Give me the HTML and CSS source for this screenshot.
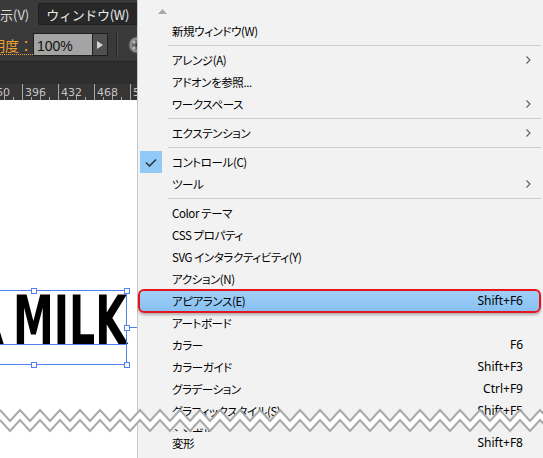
FILE: index.html
```html
<!DOCTYPE html>
<html lang="ja">
<head>
<meta charset="utf-8">
<title>ウィンドウ メニュー</title>
<link rel="stylesheet" href="styles.css">
</head>
<body>
<div class="screen">
  <div class="app">
    <div class="menubar">
      <span class="mb-item">表示(V)</span>
      <span class="mb-btn">ウィンドウ(W)</span>
    </div>
    <div class="toolbar">
      <span class="tb-label">明度：</span>
      <div class="field">
        <span class="field-val">100%</span>
        <span class="field-btn"><svg width="6" height="8" viewBox="0 0 6 8"><path d="M0 0 L6 4 L0 8 Z" fill="#d6d6d6"/></svg></span>
      </div>
      <span class="tb-sep"></span>
      <span class="tb-icon"><svg width="18" height="18" viewBox="0 0 18 18"><circle cx="9" cy="9" r="8" fill="#8c8c8c" stroke="#5a5a5a"/><circle cx="9" cy="9" r="5" fill="#6a6a6a"/><circle cx="6" cy="6" r="1.5" fill="#bbb"/><circle cx="12" cy="6" r="1.5" fill="#bbb"/><circle cx="6" cy="12" r="1.5" fill="#bbb"/><circle cx="12" cy="12" r="1.5" fill="#bbb"/><circle cx="9" cy="9" r="1.5" fill="#333"/></svg></span>
    </div>
    <div class="strip"></div>
    <div class="ruler">
      <svg width="137" height="16" viewBox="0 0 137 16">
        <g stroke="#a8a8a8" stroke-width="1">
          <line x1="22.5" y1="0" x2="22.5" y2="16"/>
          <line x1="58.5" y1="0" x2="58.5" y2="16"/>
          <line x1="94.5" y1="0" x2="94.5" y2="16"/>
          <line x1="130.5" y1="0" x2="130.5" y2="16"/>
          <line x1="13.5" y1="13" x2="13.5" y2="16"/>
          <line x1="4.5" y1="11" x2="4.5" y2="16"/>
          <line x1="31.5" y1="13" x2="31.5" y2="16"/>
          <line x1="40.5" y1="11" x2="40.5" y2="16"/>
          <line x1="49.5" y1="13" x2="49.5" y2="16"/>
          <line x1="67.5" y1="13" x2="67.5" y2="16"/>
          <line x1="76.5" y1="11" x2="76.5" y2="16"/>
          <line x1="85.5" y1="13" x2="85.5" y2="16"/>
          <line x1="103.5" y1="13" x2="103.5" y2="16"/>
          <line x1="112.5" y1="11" x2="112.5" y2="16"/>
          <line x1="121.5" y1="13" x2="121.5" y2="16"/>
        </g>
        <g class="ruler-num" fill="#c4c4c4">
          <text x="-11" y="12">360</text>
          <text x="25" y="12">396</text>
          <text x="61" y="12">432</text>
          <text x="97" y="12">468</text>
          <text x="133" y="12">504</text>
        </g>
      </svg>
    </div>
    <div class="canvas">
      <svg class="art" width="137" height="358" viewBox="0 0 137 358">
        <text class="art-text" x="-40" y="244" textLength="44" lengthAdjust="spacingAndGlyphs">A</text>
        <text class="art-text" x="13" y="244" textLength="114" lengthAdjust="spacingAndGlyphs">MILK</text>
        <g stroke="#4f80ef" stroke-width="1" fill="none">
          <rect x="-60.5" y="190.5" width="187" height="74"/>
          <line x1="-60" y1="244.5" x2="127" y2="244.5"/>
          <line x1="127" y1="227.5" x2="137" y2="227.5"/>
        </g>
        <g stroke="#4f80ef" stroke-width="1" fill="#fff">
          <rect x="31.5" y="188.5" width="5" height="5"/>
          <rect x="124.5" y="188.5" width="5" height="5"/>
          <rect x="124.5" y="225.5" width="5" height="5"/>
          <rect x="31.5" y="262.5" width="5" height="5"/>
          <rect x="124.5" y="262.5" width="5" height="5"/>
        </g>
      </svg>
    </div>
  </div>

  <div class="menu">
    <div class="scroll-up"><svg width="9" height="5" viewBox="0 0 9 5"><path d="M0 5 L4.5 0 L9 5 Z" fill="#a9a9a9"/></svg></div>
    <div class="item"><span class="gutter"></span><span class="label">新規ウィンドウ(W)</span></div>
    <div class="sep"><span></span></div>
    <div class="item"><span class="gutter"></span><span class="label">アレンジ(A)</span><svg class="chev" width="5" height="8" viewBox="0 0 5 8"><path d="M0.5 0.5 L4 4 L0.5 7.5" fill="none" stroke="#5c5c5c" stroke-width="1.1"/></svg></div>
    <div class="item"><span class="gutter"></span><span class="label">アドオンを参照...</span></div>
    <div class="item"><span class="gutter"></span><span class="label">ワークスペース</span><svg class="chev" width="5" height="8" viewBox="0 0 5 8"><path d="M0.5 0.5 L4 4 L0.5 7.5" fill="none" stroke="#5c5c5c" stroke-width="1.1"/></svg></div>
    <div class="sep"><span></span></div>
    <div class="item"><span class="gutter"></span><span class="label">エクステンション</span><svg class="chev" width="5" height="8" viewBox="0 0 5 8"><path d="M0.5 0.5 L4 4 L0.5 7.5" fill="none" stroke="#5c5c5c" stroke-width="1.1"/></svg></div>
    <div class="sep"><span></span></div>
    <div class="item"><span class="gutter checked"><svg width="12" height="9" viewBox="0 0 12 9"><path d="M1 4.5 L4.5 8 L11 1.5" fill="none" stroke="#2b3440" stroke-width="1.6"/></svg></span><span class="label">コントロール(C)</span></div>
    <div class="item"><span class="gutter"></span><span class="label">ツール</span><svg class="chev" width="5" height="8" viewBox="0 0 5 8"><path d="M0.5 0.5 L4 4 L0.5 7.5" fill="none" stroke="#5c5c5c" stroke-width="1.1"/></svg></div>
    <div class="sep"><span></span></div>
    <div class="item"><span class="gutter"></span><span class="label">Color テーマ</span></div>
    <div class="item"><span class="gutter"></span><span class="label">CSS プロパティ</span></div>
    <div class="item"><span class="gutter"></span><span class="label">SVG インタラクティビティ(Y)</span></div>
    <div class="item"><span class="gutter"></span><span class="label">アクション(N)</span></div>
    <div class="item hl"><span class="gutter"></span><span class="label">アピアランス(E)</span><span class="key">Shift+F6</span></div>
    <div class="item"><span class="gutter"></span><span class="label">アートボード</span></div>
    <div class="item"><span class="gutter"></span><span class="label">カラー</span><span class="key">F6</span></div>
    <div class="item"><span class="gutter"></span><span class="label">カラーガイド</span><span class="key">Shift+F3</span></div>
    <div class="item"><span class="gutter"></span><span class="label">グラデーション</span><span class="key">Ctrl+F9</span></div>
    <div class="item"><span class="gutter"></span><span class="label">グラフィックスタイル(S)</span><span class="key">Shift+F5</span></div>
    <div class="item clip"><span class="gutter"></span><span class="label">シンボル</span></div>
    <div class="item"><span class="gutter"></span><span class="label">変形</span><span class="key">Shift+F8</span></div>
  </div>

  <svg class="zigzag" width="543" height="30" viewBox="0 0 543 30">
    <polygon fill="#ffffff" points="0,5 10,16 20,5 30,16 40,5 50,16 60,5 70,16 80,5 90,16 100,5 110,16 120,5 130,16 140,5 150,16 160,5 170,16 180,5 190,16 200,5 210,16 220,5 230,16 240,5 250,16 260,5 270,16 280,5 290,16 300,5 310,16 320,5 330,16 340,5 350,16 360,5 370,16 380,5 390,16 400,5 410,16 420,5 430,16 440,5 450,16 460,5 470,16 480,5 490,16 500,5 510,16 520,5 530,16 540,5 550,16 550,26 540,15 530,26 520,15 510,26 500,15 490,26 480,15 470,26 460,15 450,26 440,15 430,26 420,15 410,26 400,15 390,26 380,15 370,26 360,15 350,26 340,15 330,26 320,15 310,26 300,15 290,26 280,15 270,26 260,15 250,26 240,15 230,26 220,15 210,26 200,15 190,26 180,15 170,26 160,15 150,26 140,15 130,26 120,15 110,26 100,15 90,26 80,15 70,26 60,15 50,26 40,15 30,26 20,15 10,26 0,15"/>
    <polyline fill="none" stroke="#a9a9a9" stroke-width="2" points="0,5 10,16 20,5 30,16 40,5 50,16 60,5 70,16 80,5 90,16 100,5 110,16 120,5 130,16 140,5 150,16 160,5 170,16 180,5 190,16 200,5 210,16 220,5 230,16 240,5 250,16 260,5 270,16 280,5 290,16 300,5 310,16 320,5 330,16 340,5 350,16 360,5 370,16 380,5 390,16 400,5 410,16 420,5 430,16 440,5 450,16 460,5 470,16 480,5 490,16 500,5 510,16 520,5 530,16 540,5 550,16"/>
    <polyline fill="none" stroke="#a9a9a9" stroke-width="2" points="0,15 10,26 20,15 30,26 40,15 50,26 60,15 70,26 80,15 90,26 100,15 110,26 120,15 130,26 140,15 150,26 160,15 170,26 180,15 190,26 200,15 210,26 220,15 230,26 240,15 250,26 260,15 270,26 280,15 290,26 300,15 310,26 320,15 330,26 340,15 350,26 360,15 370,26 380,15 390,26 400,15 410,26 420,15 430,26 440,15 450,26 460,15 470,26 480,15 490,26 500,15 510,26 520,15 530,26 540,15 550,26"/>
  </svg>
</div>
</body>
</html>
```

FILE: styles.css
```css
html, body {
  margin: 0;
  padding: 0;
  background: #ffffff;
}

.screen {
  position: relative;
  display: flex;
  width: 543px;
  height: 458px;
  overflow: hidden;
  font-family: "Noto Sans CJK JP", "Noto Sans", sans-serif;
}

/* ---------- left: application ---------- */
.app {
  flex: none;
  width: 137px;
  display: flex;
  flex-direction: column;
  overflow: hidden;
  background: #ffffff;
}

.menubar {
  flex: none;
  height: 28px;
  display: flex;
  align-items: center;
  background: #3a3a3a;
  white-space: nowrap;
  font-size: 13px;
  color: #dcdcdc;
}

.mb-item {
  margin-left: -13px;
  flex: none;
}

.mb-btn {
  flex: none;
  margin-left: 9px;
  height: 20px;
  padding: 0 14px 0 7px;
  display: flex;
  align-items: center;
  background: #282828;
  border: 1px solid #1e1e1e;
  border-radius: 2px;
  color: #e8e8e8;
  letter-spacing: -0.3px;
}

.toolbar {
  flex: none;
  height: 34px;
  display: flex;
  align-items: center;
  background: #393939;
  border-bottom: 1px solid #262626;
  box-sizing: border-box;
  white-space: nowrap;
}

.tb-label {
  flex: none;
  margin-left: -9px;
  font-size: 14px;
  color: #f0a232;
  border-bottom: 1px dotted #f0a232;
  line-height: 17px;
  margin-top: 2px;
}

.field {
  flex: none;
  display: flex;
  height: 23px;
  border: 1px solid #1f1f1f;
  box-sizing: border-box;
}

.field-val {
  width: 58px;
  box-sizing: border-box;
  padding-left: 3px;
  display: flex;
  align-items: center;
  background: #a4a4a4;
  font-family: "Liberation Sans", sans-serif;
  font-size: 14px;
  color: #111;
  padding-top: 2px;
}

.field-btn {
  width: 14px;
  display: flex;
  align-items: center;
  justify-content: center;
  background: #505050;
  border-left: 1px solid #1f1f1f;
}

.tb-sep {
  flex: none;
  width: 1px;
  height: 27px;
  margin-left: 8px;
  background: #262626;
  box-shadow: 1px 0 0 #4a4a4a;
}

.tb-icon {
  flex: none;
  margin-left: 11px;
  display: flex;
}

.strip {
  flex: none;
  height: 22px;
  background: #2e2e2e;
}

.ruler {
  flex: none;
  height: 16px;
  background: #363636;
  display: flex;
}

.ruler-num {
  font-family: "DejaVu Sans", sans-serif;
  font-size: 11px;
}

.canvas {
  flex: 1;
  background: #ffffff;
  position: relative;
}

.art {
  display: block;
}

.art-text {
  font-family: "Liberation Sans Narrow", "DejaVu Sans Condensed", "Liberation Sans", sans-serif;
  font-weight: 700;
  font-size: 68px;
  fill: #000000;
}

/* ---------- right: window menu ---------- */
.menu {
  flex: 1;
  display: flex;
  flex-direction: column;
  background: #f2f2f2;
  border-left: 1px solid #c9c9c9;
  font-size: 11.5px;
  color: #000;
  font-feature-settings: "palt" 1;
}

.scroll-up {
  flex: none;
  height: 20px;
  padding-left: 20px;
  padding-top: 9px;
  box-sizing: border-box;
  display: flex;
  align-items: flex-start;
}

.item {
  flex: none;
  height: 22px;
  display: flex;
  align-items: center;
  padding: 0 12px 0 2px;
  box-sizing: border-box;
  white-space: nowrap;
}

.gutter {
  flex: none;
  width: 22px;
  height: 22px;
  margin-right: 10px;
  display: flex;
  align-items: center;
  justify-content: center;
}

.gutter.checked {
  background: #91c9f7;
}

.label {
  flex: 1;
  line-height: 16px;
  letter-spacing: -0.4px;
}

.key {
  flex: none;
  margin-right: 8px;
  line-height: 16px;
  font-family: "Noto Sans", sans-serif;
  font-size: 12px;
}

.chev {
  flex: none;
}

.sep {
  flex: none;
  height: 7px;
  display: flex;
  align-items: center;
  padding: 0 2px 0 30px;
}

.sep span {
  flex: 1;
  height: 1px;
  background: #cfcfcf;
}

.item.hl {
  height: 24px;
  margin: -1px 2px -1px 0;
  padding: 0 8px 0 0;
  border: 2px solid #e8141d;
  border-radius: 6px;
  background: linear-gradient(#a0d0f8, #88c0f1);
  box-shadow: 0 2px 3px rgba(0, 0, 0, 0.28);
}

.item.hl .gutter {
  height: 20px;
}

.item.clip {
  height: 10px;
  overflow: hidden;
  align-items: flex-start;
}

.item.clip .label {
  line-height: 22px;
  margin-top: 0;
}

.zigzag {
  position: absolute;
  left: 0;
  top: 405px;
}
```
